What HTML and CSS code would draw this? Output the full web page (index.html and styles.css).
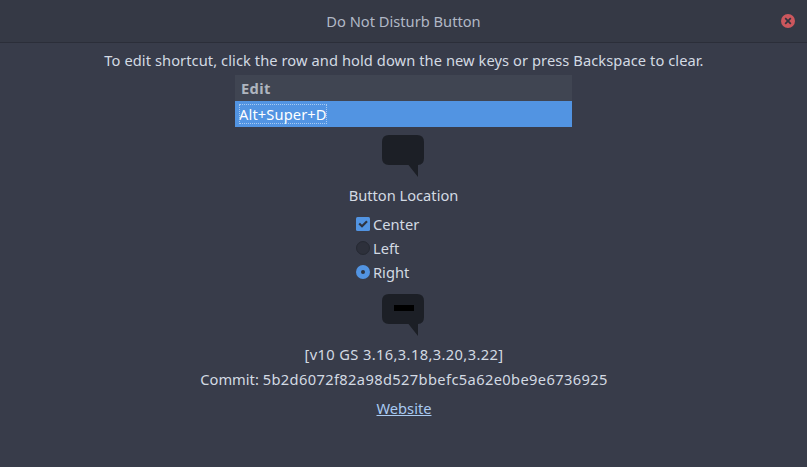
FILE: index.html
```html
<!DOCTYPE html>
<html lang="en"><head><meta charset="utf-8"><title>Do Not Disturb Button</title><link rel="stylesheet" href="styles.css"></head>
<body>
<header class="titlebar"><h1>Do Not Disturb Button</h1><button class="close" aria-label="Close"><svg width="14" height="14" viewBox="0 0 14 14"><circle cx="7" cy="7" r="7" fill="#cc575d"/><path d="M4.2 4.2l5.6 5.6M9.8 4.2l-5.6 5.6" stroke="#2f343f" stroke-width="1.7"/></svg></button></header>
<main class="content">
<p class="hint">To edit shortcut, click the row and hold down the new keys or press Backspace to clear.</p>
<div class="table"><div class="head">Edit</div><div class="row"><span class="key">Alt+Super+D</span></div></div>
<svg class="bubble" width="42" height="42" viewBox="0 0 42 42"><path d="M7 0H35Q42 0 42 7V23Q42 30 36 30V42L26.5 30H7Q0 30 0 23V7Q0 0 7 0Z" fill="#1c1f26"/></svg>
<p class="location">Button Location</p>
<div class="options">
<label><svg width="14" height="14" viewBox="0 0 14 14"><rect width="14" height="14" rx="1.5" fill="#5294e2"/><path d="M3.2 6.5L6 9.2l5-5" fill="none" stroke="#2f343f" stroke-width="2.2"/></svg>Center</label>
<label><svg width="14" height="14" viewBox="0 0 14 14"><circle cx="7" cy="7" r="6.5" fill="#2d303b" stroke="#262933"/></svg>Left</label>
<label><svg width="14" height="14" viewBox="0 0 14 14"><circle cx="7" cy="7" r="7" fill="#5294e2"/><circle cx="7" cy="7" r="2" fill="#2f343f"/></svg>Right</label>
</div>
<svg class="bubble second" width="42" height="42" viewBox="0 0 42 42"><path d="M7 0H35Q42 0 42 7V23Q42 30 36 30V42L26.5 30H7Q0 30 0 23V7Q0 0 7 0Z" fill="#1c1f26"/><rect x="12" y="11" width="20" height="6" fill="#000"/></svg>
<p class="version">[v10 GS 3.16,3.18,3.20,3.22]</p>
<p class="commit">Commit: <span class="hash">5b2d6072f82a98d527bbefc5a62e0be9e6736925</span></p>
<a class="website" href="#">Website</a>
</main></body></html>
```
FILE: styles.css
```css
*{box-sizing:border-box}
body{margin:0;height:467px;overflow:hidden;background:#383c4a;color:#d3dae3;font:14.667px/20px "Noto Sans",sans-serif}
p,h1{margin:0;white-space:nowrap}
svg{display:block;flex:none}
.titlebar{height:43px;display:grid;grid-template-columns:1fr auto 1fr;align-items:center;padding:0 12px;background:#353945;border-bottom:1px solid #2b2e39}
.titlebar h1{grid-column:2;font-size:14.667px;font-weight:400;color:#b1b8c5}
.close{grid-column:3;justify-self:end;padding:0;border:0;background:none}
.content{display:flex;flex-direction:column;align-items:center}
.hint{margin:7px 0 0 1px;letter-spacing:.075px}
.table{width:337px;margin-top:5px}
.head{height:26px;padding:3px 6px;background:#404552;font-weight:700;color:#afb5bf;letter-spacing:.4px}
.row{height:26px;padding:3px 4px;background:#5294e2;color:#fff}
.key{display:inline-block;outline:1px dotted #a8c9f0;outline-offset:-1px;width:88px;letter-spacing:.12px}
.bubble{margin:8px 1px 0 0}
.location{margin-top:8px}
.options{width:94px;margin:7px 1px 0 0}
.options label{height:24px;display:flex;align-items:center;gap:3px}
.bubble.second{margin-top:10px}
.version{margin:8px 0 0 1px;letter-spacing:.38px}
.commit{margin:5px 0 0 1px}
.hash{letter-spacing:.37px}
.website{margin:9px 0 0 1px;color:#a9caf1}
```
